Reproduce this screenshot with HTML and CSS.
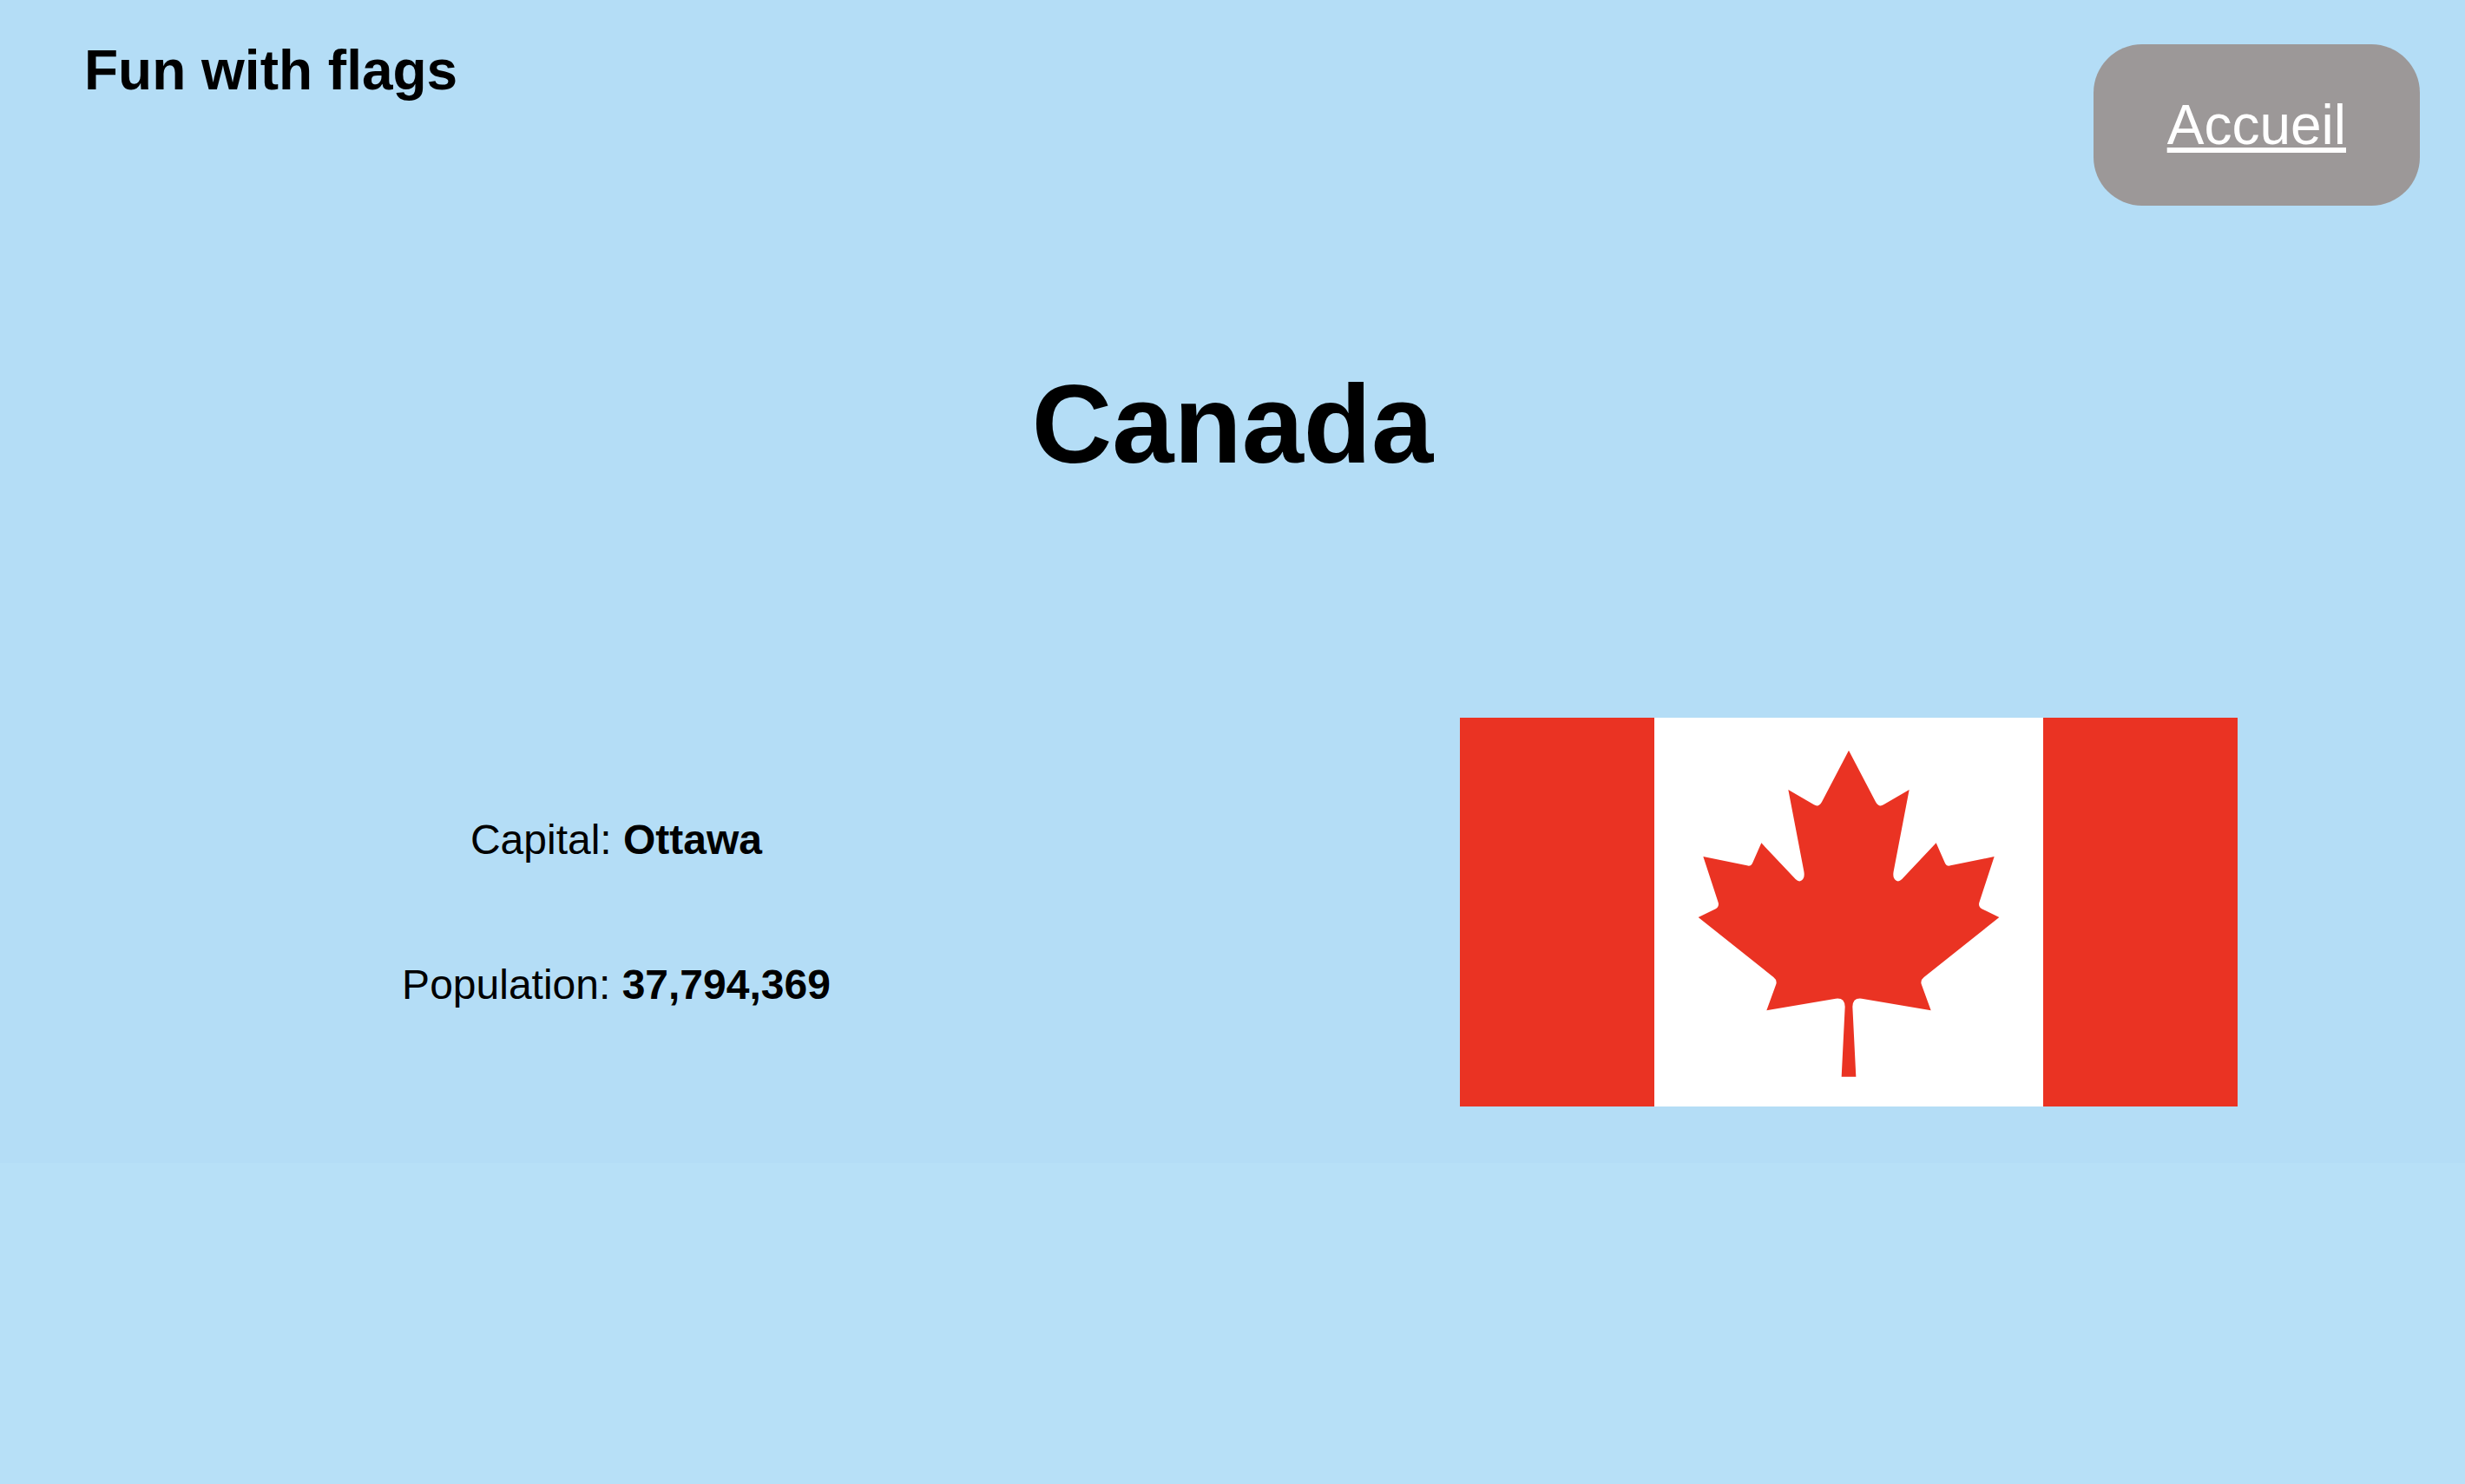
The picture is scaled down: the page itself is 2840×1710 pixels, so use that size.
FILE: index.html
```html
<!DOCTYPE html>
<html lang="en">
<head>
    <meta charset="UTF-8">
    <meta name="viewport" content="width=device-width, initial-scale=1.0">
    <title>Fun with flags</title>
    <link rel="stylesheet" href="styles.css">
</head>
<body>
    <div class="page">
        <header class="header">
            <h2 class="logo">Fun with flags</h2>
            <a class="home-btn" href="#">Accueil</a>
        </header>

        <h1 class="country-name">Canada</h1>

        <div class="country">
            <div class="facts">
                <p>Capital: <strong>Ottawa</strong></p>
                <p>Population: <strong>37,794,369</strong></p>
            </div>
            <div class="flag-col">
                <svg class="flag" viewBox="0 0 2688 1344" role="img" aria-label="Flag of Canada">
                    <rect width="2688" height="1344" fill="#fff"/>
                    <rect width="672" height="1344" fill="#ea3323"/>
                    <rect x="2016" width="672" height="1344" fill="#ea3323"/>
                    <path transform="translate(654 69)" fill="#ea3323" d="M690 44 L783 222 Q794 242 810 232 L899 180 L845 462 Q841 484 852 493 Q862 501 874 489 L992 364 L1022 432 Q1027 446 1042 442 L1193 411 L1141 570 Q1137 584 1150 592 L1210 621 L950 828 Q937 838 941 852 L974 943 L735 902 Q704 898 703 930 L715 1172 L665 1172 L677 930 Q676 898 645 902 L406 943 L439 852 Q443 838 430 828 L170 621 L230 592 Q243 584 239 570 L187 411 L338 442 Q353 446 358 432 L388 364 L506 489 Q518 501 528 493 Q539 484 535 462 L481 180 L570 232 Q586 242 597 222 Z"/>
                </svg>
            </div>
        </div>
    </div>
</body>
</html>
```

FILE: styles.css
```css
body {
    margin: 0;
    background-color: #b7e0f7;
    color: #000;
    font-family: "Liberation Sans", Arial, sans-serif;
}
.page {
    height: 1340px;
    background-color: #b4ddf6;
}
.header {
    display: flex;
    justify-content: space-between;
    align-items: flex-start;
    padding: 44px 52px 0 97px;
}
.logo {
    margin: 0;
    font-size: 64px;
    font-weight: bold;
}
.home-btn {
    margin-top: 7px;
    padding: 56px 85px;
    background-color: #9c9898;
    border-radius: 56px;
    color: #fff;
    font-size: 64px;
}
.country-name {
    margin: 178px 0 0;
    font-size: 128px;
    font-weight: bold;
    text-align: center;
}
.country {
    display: grid;
    grid-template-columns: 1fr 1fr;
    align-items: center;
    margin-top: 265px;
}
.facts {
    font-size: 48px;
    text-align: center;
}
.facts p {
    margin: 0;
}
.facts p + p {
    margin-top: 112px;
}
.flag-col {
    display: flex;
    justify-content: center;
}
.flag {
    display: block;
    width: 896px;
    height: 448px;
}
```
